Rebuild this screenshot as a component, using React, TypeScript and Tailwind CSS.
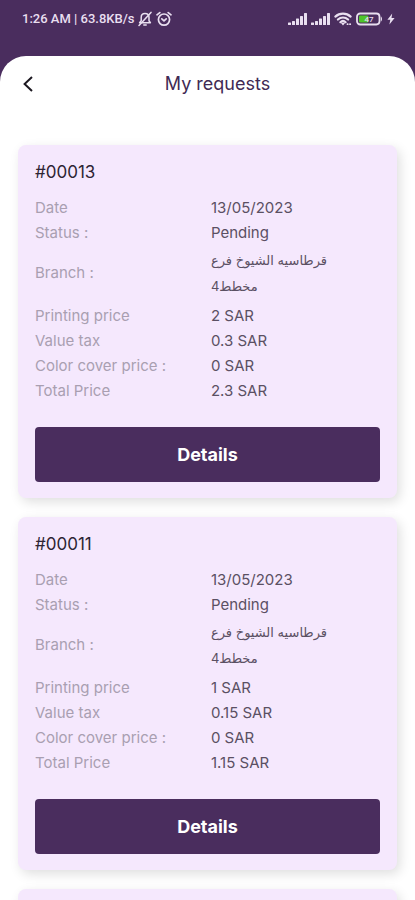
interface PrintRequest {
  id: string;
  date: string;
  status: string;
  branch: string;
  printingPrice: number;
  valueTax: number;
  colorCoverPrice: number;
  totalPrice: number;
}

const REQUESTS: PrintRequest[] = [
  {
    id: '00013',
    date: '13/05/2023',
    status: 'Pending',
    branch: 'قرطاسيه الشيوخ فرع مخطط4',
    printingPrice: 2,
    valueTax: 0.3,
    colorCoverPrice: 0,
    totalPrice: 2.3,
  },
  {
    id: '00011',
    date: '13/05/2023',
    status: 'Pending',
    branch: 'قرطاسيه الشيوخ فرع مخطط4',
    printingPrice: 1,
    valueTax: 0.15,
    colorCoverPrice: 0,
    totalPrice: 1.15,
  },
];

function BackIcon() {
  return (
    <svg viewBox="0 0 24 24" className="size-6" fill="none" stroke="currentColor" strokeWidth="2" aria-hidden="true">
      <path d="M16 5L8.6 12L16 19" />
    </svg>
  );
}

function MutedBellIcon() {
  return (
    <svg viewBox="0 0 14 16" className="h-4 w-3.5" fill="none" stroke="currentColor" strokeWidth="1.5" strokeLinecap="round" strokeLinejoin="round" aria-hidden="true">
      <path d="M1.6 11.8h10.8L11 9.8V6.4C11 4.2 9.4 2.6 7 2.6S3.2 4.2 3.2 6.4v3.4z" />
      <path d="M5.8 14h2.4" />
      <path d="M13 1.4L1 14.4" />
    </svg>
  );
}

function AlarmIcon() {
  return (
    <svg viewBox="0 0 16 16" className="size-4" fill="none" stroke="currentColor" strokeWidth="1.7" strokeLinecap="round" strokeLinejoin="round" aria-hidden="true">
      <circle cx="8" cy="8.6" r="5.6" />
      <path d="M5.8 7.8L8 9.8L10.2 7.8" />
      <path d="M1 3.8L3.8 1.6M15 3.8L12.2 1.6" />
    </svg>
  );
}

function SignalIcon() {
  return (
    <svg viewBox="0 0 19 14" className="h-3.5 w-[19px]" fill="currentColor" aria-hidden="true">
      <rect x="0" y="10.5" width="3" height="2.5" rx="0.5" />
      <rect x="4" y="9" width="3" height="4" rx="0.5" />
      <rect x="8" y="6.5" width="3" height="6.5" rx="0.5" />
      <rect x="12" y="4" width="3" height="9" rx="0.5" />
      <rect x="16" y="1" width="3" height="12" rx="0.5" />
    </svg>
  );
}

function WifiIcon() {
  return (
    <svg viewBox="0 0 18 14" className="h-3.5 w-[18px]" fill="none" stroke="currentColor" strokeWidth="2.2" strokeLinecap="round" aria-hidden="true">
      <path d="M1.4 4.6C5.6 0.6 12.4 0.6 16.6 4.6" />
      <path d="M3.9 7.5C6.8 4.8 11.2 4.8 14.1 7.5" />
      <path d="M6.4 10.2C7.9 8.8 10.1 8.8 11.6 10.2" />
      <path d="M8.2 11.4h1.6L9 12.4z" fill="currentColor" strokeWidth="1.4" />
      <path d="M13.5 12.2h0.2M16 12.2h0.2" strokeWidth="1.8" />
    </svg>
  );
}

function BatteryIcon() {
  return (
    <svg viewBox="0 0 27 14" className="h-3.5 w-[27px]" aria-hidden="true">
      <rect x="1" y="1.5" width="22.5" height="11" rx="3.2" fill="none" stroke="currentColor" strokeWidth="1.8" />
      <path d="M24.8 4.5c1.6 0.6 1.6 4.4 0 5z" fill="currentColor" />
      <rect x="3" y="3.6" width="9.4" height="6.8" rx="1" fill="#4fc42a" />
      <text x="13" y="10" fontSize="8" fontWeight="500" textAnchor="middle" fill="currentColor" fontFamily="Roboto, sans-serif">
        47
      </text>
    </svg>
  );
}

function BoltIcon() {
  return (
    <svg viewBox="0 0 8 12" className="h-3 w-2" fill="currentColor" aria-hidden="true">
      <path d="M5.2 0.5L0.4 6.8h2.9L2.4 11.5L7.6 5H4.5z" />
    </svg>
  );
}

function StatusBar() {
  return (
    <div className="flex h-14 shrink-0 items-start justify-between pt-2.5 pr-5 pl-[22px] font-[Roboto,sans-serif] text-[#e9dff0]">
      <div className="flex h-[18px] items-center gap-1">
        <span className="text-[13px] leading-[18px] font-medium">1:26 AM | 63.8KB/s</span>
        <div className="flex items-center gap-1">
          <MutedBellIcon />
          <AlarmIcon />
        </div>
      </div>
      <div className="flex h-[18px] items-center gap-1">
        <SignalIcon />
        <SignalIcon />
        <WifiIcon />
        <BatteryIcon />
        <BoltIcon />
      </div>
    </div>
  );
}

function Row({ label, value }: { label: string; value: string }) {
  return (
    <div className="flex leading-[25px]">
      <dt className="w-[51%] text-[#a99fb1]">{label}</dt>
      <dd className="text-[#5b5063]">{value}</dd>
    </div>
  );
}

function RequestCard({ request }: { request: PrintRequest }) {
  return (
    <article className="rounded-lg bg-[#f5e8fd] px-[17px] pt-[15px] pb-4 shadow-[3px_4px_12px_rgba(0,0,0,0.13)]">
      <h2 className="text-[17px] leading-6 text-[#2d2433]">#{request.id}</h2>
      <dl className="mt-[11px] text-[15px]">
        <Row label="Date" value={request.date} />
        <Row label="Status :" value={request.status} />
        <div className="flex items-center pt-0.5 pb-1">
          <dt className="w-[51%] text-[#a99fb1]">Branch :</dt>
          <dd dir="rtl" lang="ar" className="w-32 text-left font-[Inter,'DejaVu_Sans',sans-serif] text-[13px] leading-[26px] text-[#5b5063]">
            {request.branch}
          </dd>
        </div>
        <Row label="Printing price" value={`${request.printingPrice} SAR`} />
        <Row label="Value tax" value={`${request.valueTax} SAR`} />
        <Row label="Color cover price :" value={`${request.colorCoverPrice} SAR`} />
        <Row label="Total Price" value={`${request.totalPrice} SAR`} />
      </dl>
      <button
        type="button"
        className="mt-6 h-[55px] w-full rounded bg-[#4a2d5e] text-lg font-bold text-white"
      >
        Details
      </button>
    </article>
  );
}

export default function App() {
  return (
    <div className="flex h-screen flex-col overflow-hidden bg-[#4a2d5e] font-[Inter,sans-serif]">
      <StatusBar />
      <div className="flex min-h-0 flex-1 flex-col rounded-t-[26px] bg-white">
        <header className="flex h-14 shrink-0 items-center pr-7 pl-2">
          <button type="button" aria-label="Back" className="flex size-10 items-center justify-center text-[#1c1820]">
            <BackIcon />
          </button>
          <h1 className="flex-1 text-center text-lg text-[#412a54]">My requests</h1>
        </header>
        <main className="flex min-h-0 flex-1 flex-col gap-[19px] overflow-y-auto px-[18px] pt-[33px] [scrollbar-width:none]">
          {REQUESTS.map((request) => (
            <RequestCard key={request.id} request={request} />
          ))}
          {/* Empty card shell at the end of the list */}
          <div className="h-24 shrink-0 rounded-lg bg-[#f5e8fd] shadow-[3px_4px_12px_rgba(0,0,0,0.13)]" />
        </main>
      </div>
    </div>
  );
}
